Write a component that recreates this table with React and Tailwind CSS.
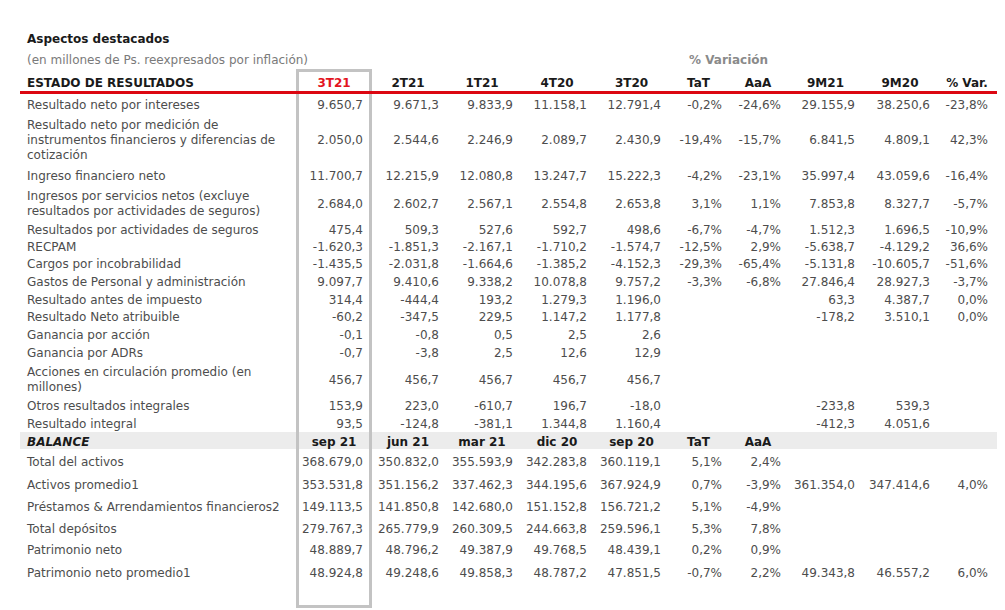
import React from "react";

// column widths + right padding for numbers (first one is the highlighted 3T21 column)
const cols = [
  "w-[76px] pr-[6px] border-x-[3px] border-[#c3c3c3]",
  "w-[72px] pr-[5px]",
  "w-[76px] pr-[7px]",
  "w-[74px] pr-[7px]",
  "w-[75px] pr-[8px]",
  "w-[59px] pr-[6px]",
  "w-[60px] pr-[7px]",
  "w-[75px] pr-[8px]",
  "w-[74px] pr-[7px]",
  "w-[60px] pr-[9px]",
];

const headCols = [
  "w-[76px] border-x-[3px] border-t-[3px] border-[#c3c3c3] text-[#e3141e]",
  "w-[72px]",
  "w-[76px]",
  "w-[74px]",
  "w-[75px]",
  "w-[59px]",
  "w-[60px]",
  "w-[75px]",
  "w-[74px]",
  "w-[60px]",
];

const balanceCols = [
  "w-[76px] border-x-[3px] border-[#c3c3c3]",
  "w-[72px]",
  "w-[76px]",
  "w-[74px]",
  "w-[75px]",
  "w-[59px]",
  "w-[60px]",
  "w-[75px]",
  "w-[74px]",
  "w-[60px]",
];

const resultados = [
  {
    label: ["Resultado neto por intereses"],
    h: "h-[20px]",
    v: ["9.650,7", "9.671,3", "9.833,9", "11.158,1", "12.791,4", "-0,2%", "-24,6%", "29.155,9", "38.250,6", "-23,8%"],
  },
  {
    label: ["Resultado neto por medición de", "instrumentos financieros y diferencias de", "cotización"],
    h: "h-[50px]",
    v: ["2.050,0", "2.544,6", "2.246,9", "2.089,7", "2.430,9", "-19,4%", "-15,7%", "6.841,5", "4.809,1", "42,3%"],
  },
  {
    label: ["Ingreso financiero neto"],
    h: "h-[21px]",
    v: ["11.700,7", "12.215,9", "12.080,8", "13.247,7", "15.222,3", "-4,2%", "-23,1%", "35.997,4", "43.059,6", "-16,4%"],
  },
  {
    label: ["Ingresos por servicios netos (excluye", "resultados por actividades de seguros)"],
    h: "h-[35px]",
    v: ["2.684,0", "2.602,7", "2.567,1", "2.554,8", "2.653,8", "3,1%", "1,1%", "7.853,8", "8.327,7", "-5,7%"],
  },
  {
    label: ["Resultados por actividades de seguros"],
    h: "h-[17px]",
    v: ["475,4", "509,3", "527,6", "592,7", "498,6", "-6,7%", "-4,7%", "1.512,3", "1.696,5", "-10,9%"],
  },
  {
    label: ["RECPAM"],
    h: "h-[17px]",
    v: ["-1.620,3", "-1.851,3", "-2.167,1", "-1.710,2", "-1.574,7", "-12,5%", "2,9%", "-5.638,7", "-4.129,2", "36,6%"],
  },
  {
    label: ["Cargos por incobrabilidad"],
    h: "h-[18px]",
    v: ["-1.435,5", "-2.031,8", "-1.664,6", "-1.385,2", "-4.152,3", "-29,3%", "-65,4%", "-5.131,8", "-10.605,7", "-51,6%"],
  },
  {
    label: ["Gastos de Personal y administración"],
    h: "h-[18px]",
    v: ["9.097,7", "9.410,6", "9.338,2", "10.078,8", "9.757,2", "-3,3%", "-6,8%", "27.846,4", "28.927,3", "-3,7%"],
  },
  {
    label: ["Resultado antes de impuesto"],
    h: "h-[17px]",
    v: ["314,4", "-444,4", "193,2", "1.279,3", "1.196,0", "", "", "63,3", "4.387,7", "0,0%"],
  },
  {
    label: ["Resultado Neto atribuible"],
    h: "h-[18px]",
    v: ["-60,2", "-347,5", "229,5", "1.147,2", "1.177,8", "", "", "-178,2", "3.510,1", "0,0%"],
  },
  {
    label: ["Ganancia por acción"],
    h: "h-[18px]",
    v: ["-0,1", "-0,8", "0,5", "2,5", "2,6", "", "", "", "", ""],
  },
  {
    label: ["Ganancia por ADRs"],
    h: "h-[18px]",
    v: ["-0,7", "-3,8", "2,5", "12,6", "12,9", "", "", "", "", ""],
  },
  {
    label: ["Acciones en circulación promedio (en", "millones)"],
    h: "h-[35px]",
    v: ["456,7", "456,7", "456,7", "456,7", "456,7", "", "", "", "", ""],
  },
  {
    label: ["Otros resultados integrales"],
    h: "h-[18px]",
    v: ["153,9", "223,0", "-610,7", "196,7", "-18,0", "", "", "-233,8", "539,3", ""],
  },
  {
    label: ["Resultado integral"],
    h: "h-[18px]",
    v: ["93,5", "-124,8", "-381,1", "1.344,8", "1.160,4", "", "", "-412,3", "4.051,6", ""],
  },
];

const balance = [
  {
    label: ["Total del activos"],
    h: "h-[24px]",
    v: ["368.679,0", "350.832,0", "355.593,9", "342.283,8", "360.119,1", "5,1%", "2,4%", "", "", ""],
  },
  {
    label: ["Activos promedio1"],
    h: "h-[22px]",
    v: ["353.531,8", "351.156,2", "337.462,3", "344.195,6", "367.924,9", "0,7%", "-3,9%", "361.354,0", "347.414,6", "4,0%"],
  },
  {
    label: ["Préstamos & Arrendamientos financieros2"],
    h: "h-[22px]",
    v: ["149.113,5", "141.850,8", "142.680,0", "151.152,8", "156.721,2", "5,1%", "-4,9%", "", "", ""],
  },
  {
    label: ["Total depósitos"],
    h: "h-[21px]",
    v: ["279.767,3", "265.779,9", "260.309,5", "244.663,8", "259.596,1", "5,3%", "7,8%", "", "", ""],
  },
  {
    label: ["Patrimonio neto"],
    h: "h-[22px]",
    v: ["48.889,7", "48.796,2", "49.387,9", "49.768,5", "48.439,1", "0,2%", "0,9%", "", "", ""],
  },
  {
    label: ["Patrimonio neto promedio1"],
    h: "h-[23px]",
    v: ["48.924,8", "49.248,6", "49.858,3", "48.787,2", "47.851,5", "-0,7%", "2,2%", "49.343,8", "46.557,2", "6,0%"],
  },
];

const Row = ({ row }) => (
  <div className={`flex ${row.h}`}>
    <div className="w-[276px] shrink-0 pl-[7px] pt-[3px] flex flex-col justify-center whitespace-nowrap">
      {row.label.map((l, i) => (
        <span key={i}>{l}</span>
      ))}
    </div>
    {row.v.map((val, i) => (
      <div
        key={i}
        className={`${cols[i]} shrink-0 pt-[3px] flex items-center justify-end whitespace-nowrap`}
      >
        {val}
      </div>
    ))}
  </div>
);

const App = () => {
  return (
    <div className="w-[1005px] h-[610px] bg-white overflow-hidden font-['DejaVu_Sans',sans-serif] text-[12px] leading-[15px] text-[#4d4d4d]">
      <div className="pt-[29px] pl-[20px] w-[997px]">
        <div className="h-[18px] pl-[7px] pt-[2px] flex items-center font-bold text-[#1a1a1a]">
          Aspectos destacados
        </div>
        <div className="flex h-[22px] pt-[6px]">
          <div className="w-[649px] pl-[7px] text-[#7a7a7a]">
            (en millones de Ps. reexpresados por inflación)
          </div>
          <div className="w-[119px] text-center font-bold text-[#8a8a8a]">% Variación</div>
        </div>

        {/* encabezado */}
        <div className="flex h-[22px] font-bold text-[#1a1a1a]">
          <div className="w-[276px] shrink-0 pl-[7px] flex items-end">
            ESTADO DE RESULTADOS
          </div>
          {["3T21", "2T21", "1T21", "4T20", "3T20", "TaT", "AaA", "9M21", "9M20", "% Var."].map(
            (h, i) => (
              <div
                key={h}
                className={`${headCols[i]} shrink-0 flex items-end justify-center`}
              >
                {h}
              </div>
            ),
          )}
        </div>
        <div className="h-[3px] bg-[#dc0712]" />

        {resultados.map((r, i) => (
          <Row key={i} row={r} />
        ))}

        {/* balance */}
        <div className="flex h-[17px] bg-[#ececec] font-bold text-[#1a1a1a]">
          <div className="w-[276px] shrink-0 pl-[7px] pt-[3px] flex items-center italic">BALANCE</div>
          {["sep 21", "jun 21", "mar 21", "dic 20", "sep 20", "TaT", "AaA", "", "", ""].map((h, i) => (
            <div
              key={i}
              className={`${balanceCols[i]} shrink-0 pt-[3px] flex items-center justify-center`}
            >
              {h}
            </div>
          ))}
        </div>

        {balance.map((r, i) => (
          <Row key={i} row={r} />
        ))}

        <div className="flex h-[25px]">
          <div className="w-[276px] shrink-0" />
          <div className="w-[76px] shrink-0 border-x-[3px] border-b-[3px] border-[#c3c3c3]" />
        </div>
      </div>
    </div>
  );
};

export default App;
